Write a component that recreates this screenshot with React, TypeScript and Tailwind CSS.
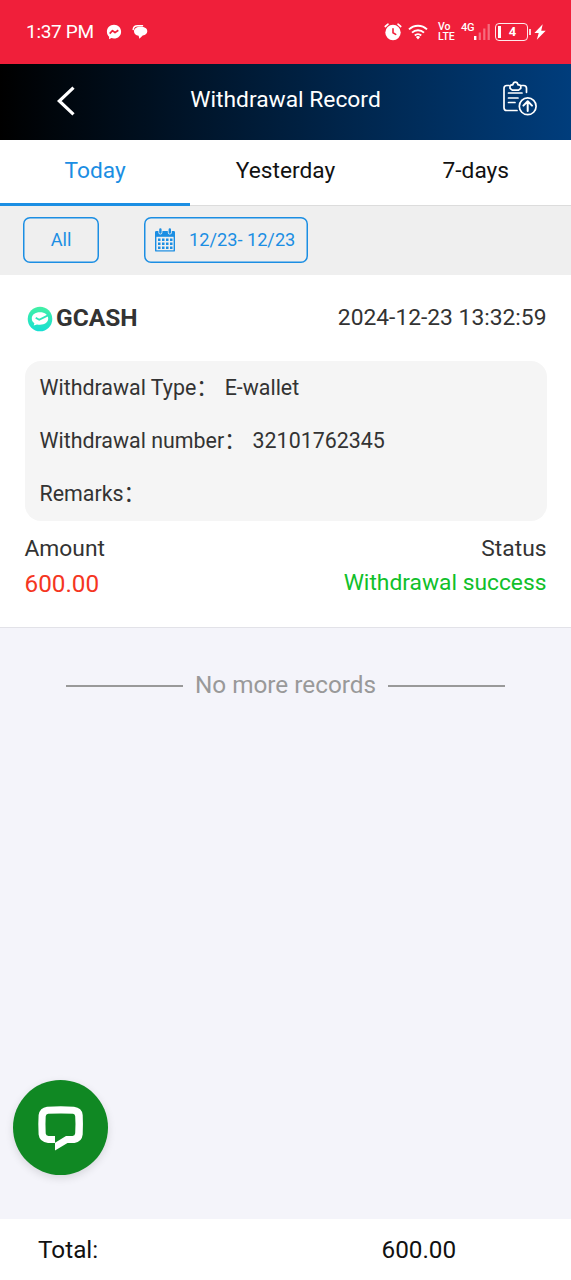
const MessengerIcon = () => (
  <svg viewBox="0 0 16 16" className="size-4" fill="none">
    <path d="M8 .8C3.800.8.9 3.800.9 7.700c0 2.100.8 3.800 2.200 5v2.500l2.300-1.100c.8.300 1.700.4 2.600.4 4.200 0 7.100-3 7.100-6.800S12.200.8 8 .8Z" fill="#fff" />
    <path d="m3.700 9.600 2.800-3 2.500 2 3.300-2.400" stroke="#f01f3a" strokeWidth="1.700" strokeLinejoin="round" />
  </svg>
);

const ChatIcon = () => (
  <svg viewBox="0 0 16 16" className="size-4" fill="none">
    <path d="M1.200 5.500C1.500 3 3 1.800 5.500 1.800h5" stroke="#fff" strokeWidth="1.500" strokeLinecap="round" />
    <path d="M8.500 2.800C4.600 2.800 2 4.600 2 7.300c0 2.400 1.700 4.200 4.600 4.500l.8 3 3.300-3.200c2.900-.4 4.600-2 4.600-4.300 0-2.800-2.600-4.500-6.800-4.500Z" fill="#fff" />
  </svg>
);

const AlarmIcon = () => (
  <svg viewBox="0 0 18 20" className="h-5 w-[18px]" fill="none" strokeLinecap="round">
    <circle cx="9" cy="10.500" r="7.700" fill="#fff" />
    <path d="M1.300 4.500 4 2.200M16.700 4.500 14 2.200" stroke="#fff" strokeWidth="1.700" />
    <path d="M9 6.800v4l2.700 1.600" stroke="#f01f3a" strokeWidth="1.600" />
  </svg>
);

const WifiIcon = () => (
  <svg viewBox="0 0 20 16" className="h-4 w-5" fill="none" stroke="#fff" strokeWidth="1.900">
    <path d="M1 5.400a13 13 0 0 1 18 0M4 8.600a8.700 8.700 0 0 1 12 0M6.800 11.500a4.700 4.700 0 0 1 6.400 0" />
    <path d="m7.900 13.100 2.100 2.500 2.100-2.500a3 3 0 0 0-4.200 0Z" fill="#fff" stroke="none" />
  </svg>
);

const SignalIcon = () => (
  <svg viewBox="0 0 18 18" className="h-[18px] w-[18px]" fill="#fff">
    <rect x="0" y="13" width="2.400" height="4" />
    <g opacity=".35">
      <rect x="4.700" y="9.500" width="2.200" height="7.500" />
      <rect x="9.200" y="5.500" width="2.200" height="11.500" />
      <rect x="13.600" y="1" width="2.200" height="16" />
    </g>
  </svg>
);

const BoltIcon = () => (
  <svg viewBox="0 0 12 16" className="h-4 w-3" fill="#fff">
    <path d="M8.700.3.400 9h4.300l-1.900 6.700L11.700 6.800H7.200Z" />
  </svg>
);

const BackIcon = () => (
  <svg viewBox="0 0 18 30" className="h-[30px] w-[18px]" fill="none" stroke="#fff" strokeWidth="3.200">
    <path d="M16.500 1.700 2.300 15l14.200 13.300" />
  </svg>
);

const ClipboardUploadIcon = () => (
  <svg viewBox="0 0 36 36" className="size-9" fill="none" stroke="#fff" strokeWidth="1.700" strokeLinecap="round" strokeLinejoin="round">
    <path d="M7 5.500H4.800A2.800 2.800 0 0 0 2 8.300v19.400a2.800 2.800 0 0 0 2.800 2.800h10.200M19.500 5.500h2.200a2.800 2.800 0 0 1 2.800 2.800v4" />
    <path d="M8 8.300V6.600c0-1.100.8-1.700 2-1.700h.8c.3-1.900 1.200-2.700 2.600-2.700s2.300.8 2.600 2.700h.8c1.200 0 2 .6 2 1.700v1.700L16.500 10.200h-6.200Z" />
    <path d="M6.500 13h13.500M6.500 18h9.500M6.500 22.500h6.500" />
    <circle cx="25.700" cy="26.300" r="8.400" />
    <path d="M25.700 31v-9M21.400 25.600l4.300-4.300 4.300 4.300" strokeWidth="2" />
  </svg>
);

const CalendarIcon = () => (
  <svg viewBox="0 0 22 24" className="h-6 w-[22px]" fill="none">
    <path d="M2.200 3h17.600A1.200 1.200 0 0 1 21 4.200v18.200a1.200 1.200 0 0 1-1.200 1.200H2.200A1.200 1.200 0 0 1 1 22.400V4.200A1.200 1.200 0 0 1 2.200 3Z" fill="#1b8ee3" />
    <path d="M2.400 8.800h17.200v13.500H2.400Z" fill="#efefef" />
    <path d="M6.400 2v2.500M15.800 2v2.500" stroke="#efefef" strokeWidth="4" strokeLinecap="round" />
    <path d="M6.400 1.500v3M15.800 1.500v3" stroke="#1b8ee3" strokeWidth="2.400" strokeLinecap="round" />
    <path d="M4 11.700h14.500M4 15.700h14.500M4 19.700h14.500" stroke="#1b8ee3" strokeWidth="2.500" strokeDasharray="2.500 1.500" />
  </svg>
);

const WalletLogo = () => (
  <svg viewBox="0 0 26 26" className="size-[26px]" fill="none">
    <defs>
      <linearGradient id="mint" x1="0" y1="0" x2="0" y2="1">
        <stop stopColor="#43f0a4" />
        <stop offset="1" stopColor="#16dfd3" />
      </linearGradient>
    </defs>
    <circle cx="13" cy="13" r="12.300" fill="url(#mint)" />
    <path d="M13 6.300c-4.900 0-8.200 2.500-8.200 6.200 0 2 .9 3.600 2.600 4.700l-.7 2.200 3.300-1c.9.200 1.900.3 3 .3 4.900 0 8.200-2.600 8.200-6.200S17.900 6.300 13 6.300Z" fill="#fff" />
    <path d="m8.700 11.800 3.500 2 9.300-4.700" stroke="#2fe6ba" strokeWidth="1.800" />
  </svg>
);

const BubbleIcon = () => (
  <svg viewBox="0 0 46 46" className="size-[46px]" fill="none">
    <path d="M9 1.800Q23 .9 36 1.800Q44 2.800 44.700 10Q45.200 19 44.700 29.500Q43.800 37 36.500 38H29.500L17 45.600V38H10Q1.500 37 .6 29.500Q0 19 .6 10Q1.800 2.800 9 1.800Z" fill="#fff" />
    <path d="M10.200 8.800Q23 8.200 35 8.800Q37 9 37.200 11.200Q37.800 19 37.200 28.200Q37 30.800 34.500 31H28L17 37.800V31H10.500Q8 30.800 7.700 28.500Q7.200 19 7.700 11.200Q8 9 10.200 8.800Z" fill="#108823" />
  </svg>
);

const details = [
  { label: "Withdrawal Type", value: "E-wallet" },
  { label: "Withdrawal number", value: "32101762345" },
  { label: "Remarks", value: "" },
];

export default function App() {
  return (
    <div className="flex h-[1280px] w-[571px] flex-col overflow-hidden bg-[#f4f4fa] font-['Roboto','Noto_Sans_CJK_SC',sans-serif] text-[#333]">
      <div className="flex h-[63.500px] shrink-0 items-center bg-[#f01f3a] pl-[26px] text-white">
        <span className="w-20 text-[19px] tracking-[-0.3px] whitespace-nowrap">1:37 PM</span>
        <MessengerIcon />
        <div className="ml-[10px]"><ChatIcon /></div>
        <div className="ml-[236px]"><AlarmIcon /></div>
        <div className="ml-[6px]"><WifiIcon /></div>
        <div className="ml-[10px] w-[23px] text-[10.500px] leading-[10px] font-medium">
          <div>Vo</div>
          <div>LTE</div>
        </div>
        <div className="mb-[8px] w-[13px] text-[11px] leading-[11px] font-medium tracking-[-0.3px]">4G</div>
        <SignalIcon />
        <div className="ml-[3px] flex h-[18px] w-[33px] items-center rounded-[4px] border-[1.5px] border-white/90 pl-[2px]">
          <div className="h-3 w-[2.5px] bg-white" />
          <span className="w-6 text-center text-[13px] leading-none font-bold">4</span>
        </div>
        <div className="ml-[1px] h-[6px] w-[2px] bg-white/80" />
        <div className="ml-[3px]"><BoltIcon /></div>
      </div>

      <header className="flex h-[76px] shrink-0 items-center bg-[linear-gradient(90deg,#000000,#003d7c)] pr-[33px] pl-[57px]">
        <div className="pb-[2px]"><BackIcon /></div>
        <h1 className="flex-1 pr-[6px] pb-[2px] text-center text-[22.800px] text-white">Withdrawal Record</h1>
        <div className="pb-[7px]"><ClipboardUploadIcon /></div>
      </header>

      <nav className="grid h-[66.500px] shrink-0 grid-cols-3 bg-white text-center text-[22.700px] leading-[62px] text-[#111]">
        <div className="border-b-3 border-[#1b8ee3] text-[#1b8ee3]">Today</div>
        <div className="border-b border-[#dcdcdc]">Yesterday</div>
        <div className="border-b border-[#dcdcdc]">7-days</div>
      </nav>

      <div className="flex h-[69px] shrink-0 items-center bg-[#efefef] pb-[1px] pl-[23px] text-[18.200px] text-[#1b8ee3]">
        <div className="flex h-[46px] w-[76px] items-center justify-center rounded-[7px] inset-ring-[1.5px] inset-ring-[#1b8ee3]">All</div>
        <div className="ml-[45px] flex h-[46px] w-[164px] items-center rounded-[7px] pl-[10px] inset-ring-[1.5px] inset-ring-[#1b8ee3]">
          <CalendarIcon />
          <span className="ml-[13px] pb-[1px] whitespace-nowrap">12/23- 12/23</span>
        </div>
      </div>

      <section className="h-[353px] shrink-0 border-b border-[#e2e2e8] bg-white px-[24.500px]">
        <div className="flex h-[85.500px] items-center justify-between">
          <div className="flex items-center pt-[2px] pl-[2.500px]">
            <WalletLogo />
            <span className="ml-[3px] text-[24.500px] font-bold">GCASH</span>
          </div>
          <span className="pt-[1px] text-[22.800px]">2024-12-23 13:32:59</span>
        </div>
        <div className="h-[160px] rounded-[16px] bg-[#f5f5f5] pl-[15px] text-[21.400px]">
          {details.map(({ label, value }) => (
            <div key={label} className="flex h-[53px] items-center pt-[2px]">
              <span>{label}：</span>
              <span className="ml-[7px]">{value}</span>
            </div>
          ))}
        </div>
        <div className="mt-[10px] flex justify-between text-[22.800px] leading-[34px]">
          <div className="pt-[1px]">
            <div>Amount</div>
            <div className="pt-[1px] text-[24.300px] text-[#f5361f]">600.00</div>
          </div>
          <div className="pt-[1px] text-right">
            <div>Status</div>
            <div className="text-[#10c02a]">Withdrawal success</div>
          </div>
        </div>
      </section>

      <main className="flex flex-1 flex-col justify-between">
        <div className="mt-[40px] flex h-9 items-center justify-center text-[24.300px] text-[#999]">
          <div className="h-[2px] w-[117px] bg-[#999]" />
          <span className="w-[205px] pb-[2px] text-center">No more records</span>
          <div className="h-[2px] w-[117px] bg-[#999]" />
        </div>
        <button className="mb-11 ml-[13px] flex size-[95px] items-center justify-center rounded-full bg-[#108823] shadow-[0_3px_8px_rgba(0,0,0,0.12)]">
          <BubbleIcon />
        </button>
      </main>

      <footer className="flex h-[61px] shrink-0 items-center bg-white pt-[1px] pl-[38px] text-[24.300px] text-[#111]">
        <span className="w-[343.500px]">Total:</span>
        <span>600.00</span>
      </footer>
    </div>
  );
}
